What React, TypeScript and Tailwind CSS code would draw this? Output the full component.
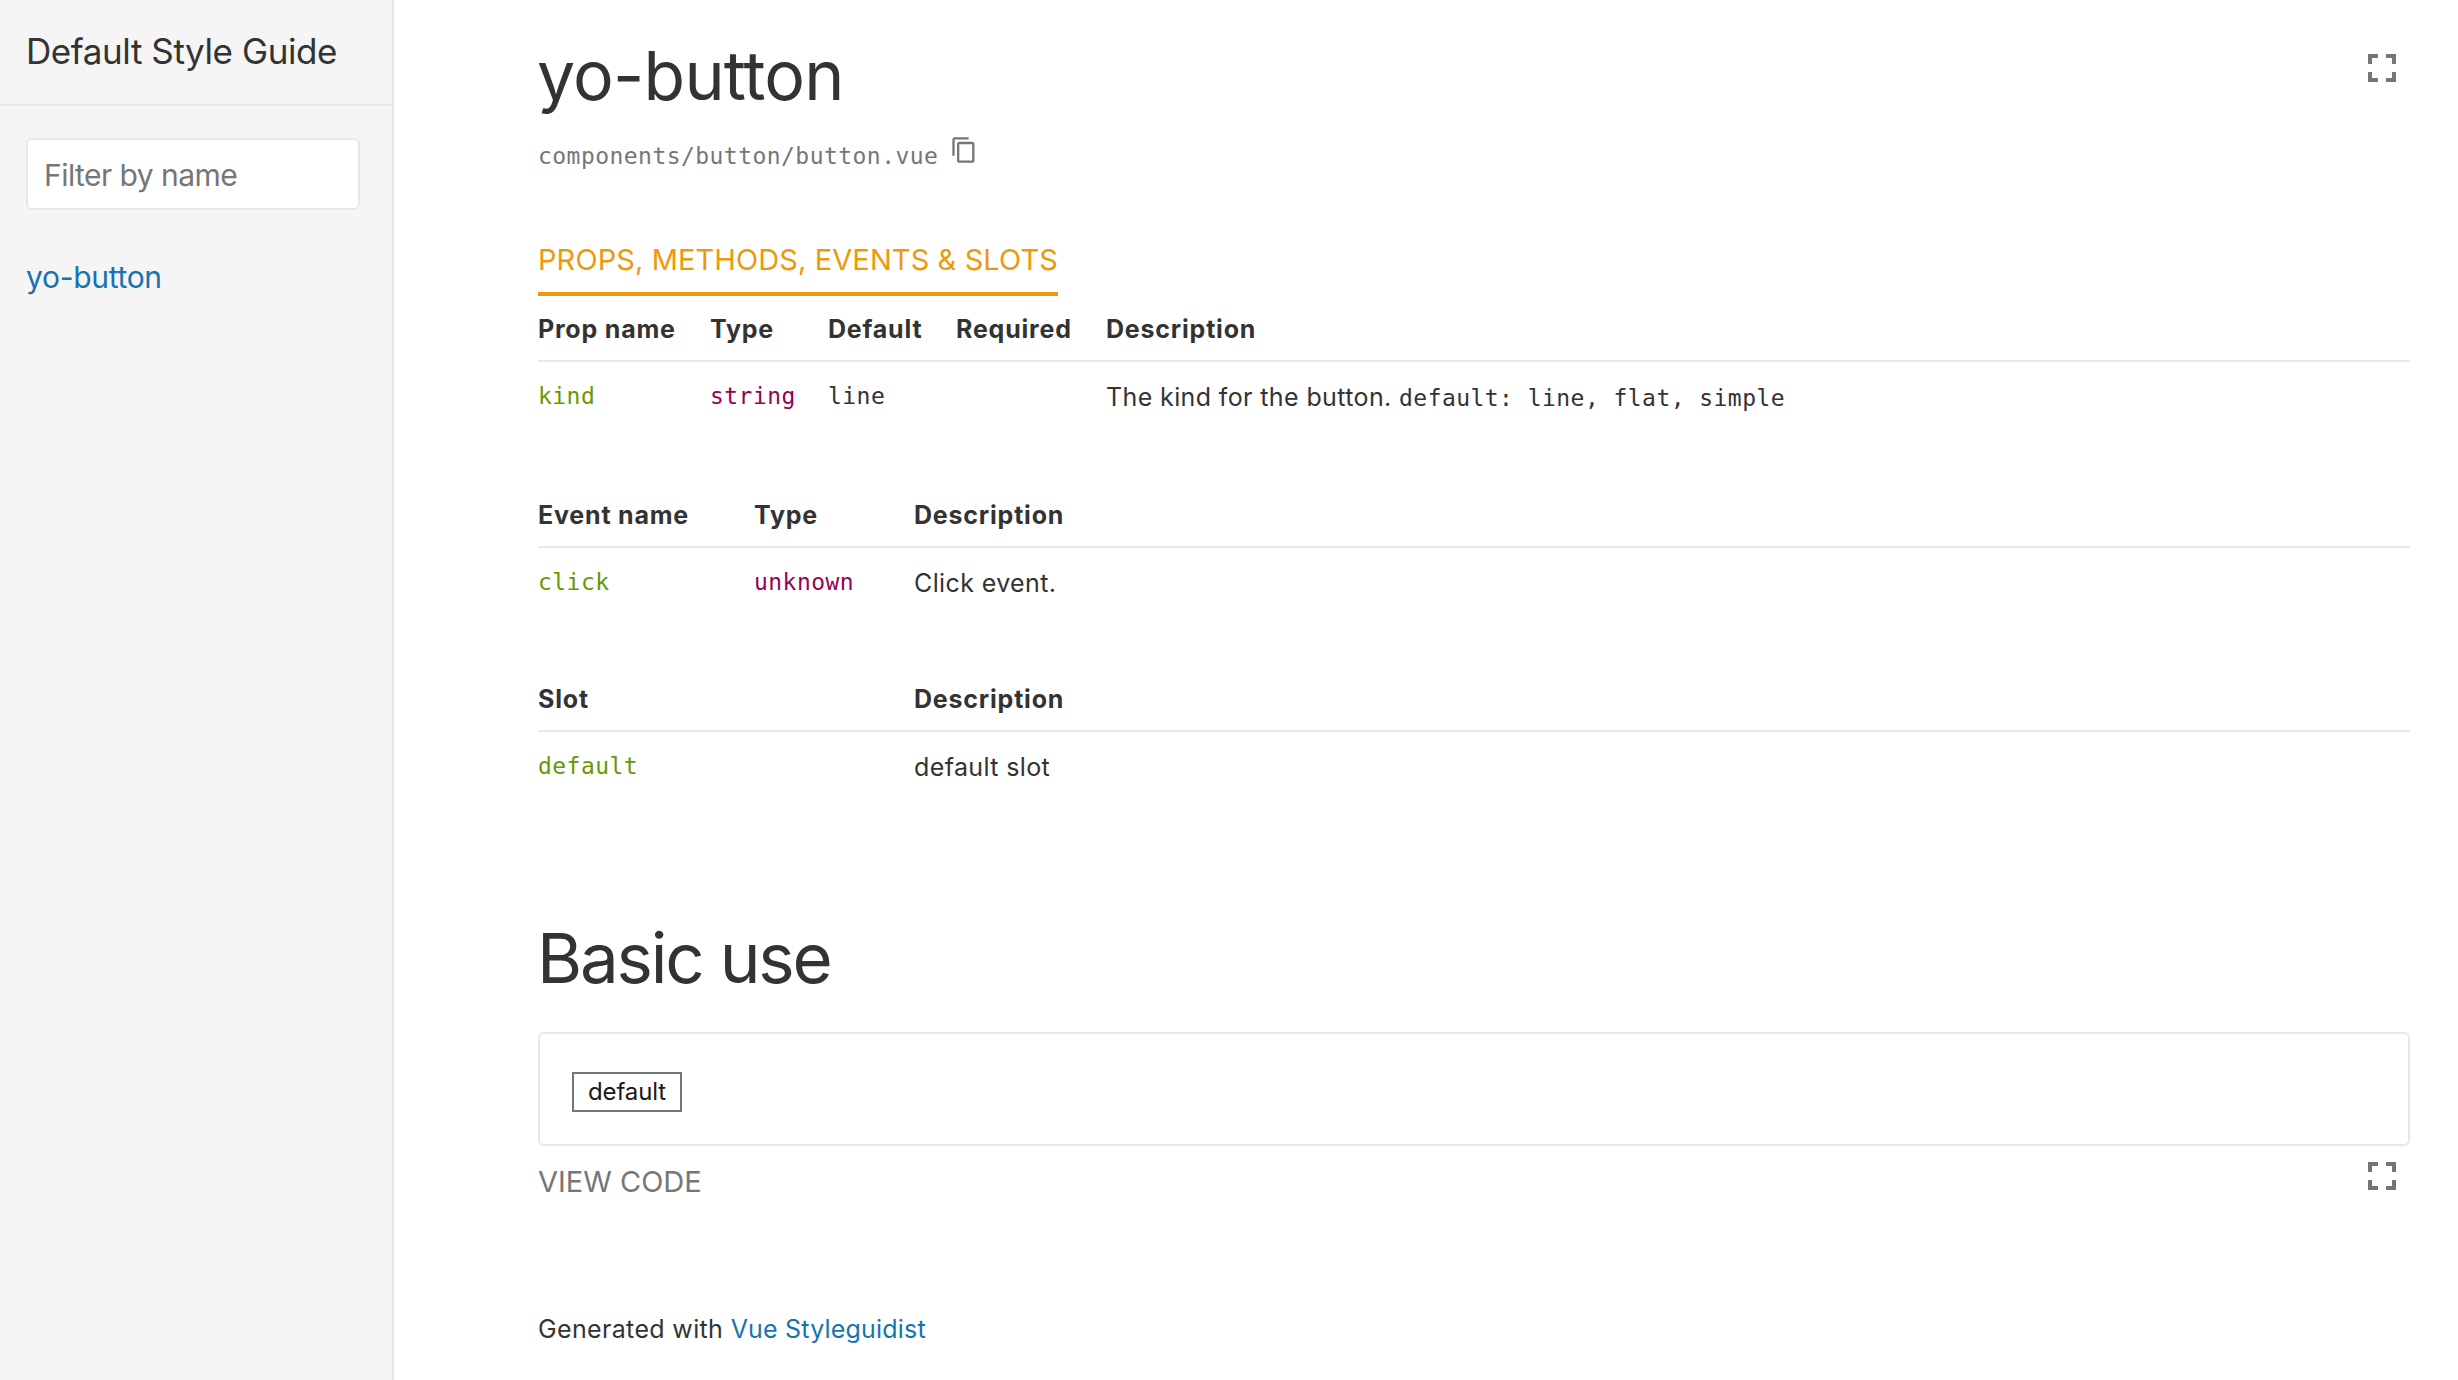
import React from "react";

const MONO = "font-['DejaVu_Sans_Mono',monospace] text-[23px] tracking-[0.45px]";

function FullscreenIcon({ className = "" }: { className?: string }) {
  return (
    <svg viewBox="0 0 24 24" fill="currentColor" className={"size-12 text-[#767676] " + className}>
      <path d="M7 14H5v5h5v-2H7v-3zm-2-4h2V7h3V5H5v5zm12 7h-3v2h5v-5h-2v3zM14 5v2h3v3h2V5h-5z" />
    </svg>
  );
}

function CopyIcon() {
  return (
    <svg viewBox="0 0 24 24" fill="currentColor" className="-mt-1.5 ml-3 size-7">
      <path d="M16 1H4c-1.1 0-2 .9-2 2v14h2V3h12V1zm3 4H8c-1.1 0-2 .9-2 2v14c0 1.1.9 2 2 2h11c1.1 0 2-.9 2-2V7c0-1.1-.9-2-2-2zm0 16H8V7h11v14z" />
    </svg>
  );
}

function CellCode({ children, className = "" }: { children: React.ReactNode; className?: string }) {
  return <code className={MONO + " block leading-8 " + className}>{children}</code>;
}

function Name({ children }: { children: React.ReactNode }) {
  return <CellCode className="text-[#669900]">{children}</CellCode>;
}

function Type({ children }: { children: React.ReactNode }) {
  return <CellCode className="text-[#990055]">{children}</CellCode>;
}

type TableProps = {
  columns: { title: string; width: string }[];
  cells: React.ReactNode[];
  className?: string;
};

function DocTable({ columns, cells, className = "" }: TableProps) {
  return (
    <table className={"w-full table-fixed border-collapse text-left " + className}>
      <thead>
        <tr className="shadow-[inset_0_-2px_0_#e8e8e8]">
          {columns.map((c) => (
            <th key={c.title} className={"h-[66px] p-0 pt-4 pb-4 align-top text-[25px] leading-[34px] font-bold tracking-[0.8px] whitespace-nowrap " + c.width}>
              {c.title}
            </th>
          ))}
        </tr>
      </thead>
      <tbody>
        <tr>
          {cells.map((cell, i) => (
            <td key={i} className="h-[52px] p-0 pt-[18px] align-top text-[25px] leading-[34px] tracking-[0.38px] whitespace-nowrap">
              <div className="h-[34px]">{cell}</div>
            </td>
          ))}
        </tr>
      </tbody>
    </table>
  );
}

export default function App() {
  return (
    <div className="flex h-[1380px] w-full overflow-hidden bg-white font-['Inter',sans-serif] text-[#333333]">
      <aside className="w-[394px] shrink-0 border-r-2 border-[#e8e8e8] bg-[#f5f5f5]">
        <header className="h-[106px] border-b-2 border-[#e8e8e8] pt-[30px] pl-[26px]">
          <h1 className="text-[35px] leading-[42px] tracking-[-0.42px]">Default Style Guide</h1>
        </header>
        <div className="pt-8 pr-8 pl-[26px]">
          <input
            placeholder="Filter by name"
            className="block h-[72px] w-full rounded-md border-2 border-[#e8e8e8] bg-white px-4 pt-0.5 text-[30px] tracking-[-0.55px] placeholder:text-[#767676]"
          />
        </div>
        <nav className="mt-[47px] pl-[26px]">
          <a className="block text-[30px] leading-10 tracking-[-0.3px] text-[#1673b1]">yo-button</a>
        </nav>
      </aside>

      <main className="min-w-0 flex-1 pr-12 pl-36">
        <header className="flex items-start justify-between">
          <h2 className="-ml-px pt-[35px] text-[68px] leading-[80px] font-[430] tracking-[-0.8px]">yo-button</h2>
          <FullscreenIcon className="mt-11 mr-1" />
        </header>
        <div className="mt-[27px] flex h-8 items-start text-[#767676]">
          <span className={MONO + " leading-7"}>components/button/button.vue</span>
          <CopyIcon />
        </div>

        <button className="mt-[67px] block w-[520px] border-b-4 border-[#ee990c] pb-3.5 text-left text-[29px] leading-[37px] tracking-[0.1px] whitespace-nowrap text-[#ee990c]">
          PROPS, METHODS, EVENTS &amp; SLOTS
        </button>

        <DocTable
          columns={[
            { title: "Prop name", width: "w-[172px]" },
            { title: "Type", width: "w-[118px]" },
            { title: "Default", width: "w-[128px]" },
            { title: "Required", width: "w-[150px]" },
            { title: "Description", width: "" },
          ]}
          cells={[
            <Name>kind</Name>,
            <Type>string</Type>,
            <CellCode>line</CellCode>,
            "",
            <>
              The kind for the button. <code className={MONO}>default: line, flat, simple</code>
            </>,
          ]}
        />
        <DocTable
          className="mt-[68px]"
          columns={[
            { title: "Event name", width: "w-[216px]" },
            { title: "Type", width: "w-[160px]" },
            { title: "Description", width: "" },
          ]}
          cells={[<Name>click</Name>, <Type>unknown</Type>, "Click event."]}
        />
        <DocTable
          className="mt-[66px]"
          columns={[
            { title: "Slot", width: "w-[376px]" },
            { title: "Description", width: "" },
          ]}
          cells={[<Name>default</Name>, "default slot"]}
        />

        <h2 className="mt-[134px] -ml-px text-[69px] leading-[81px] font-[430] tracking-[-2.2px]">Basic use</h2>
        <div className="mt-[33px] h-[114px] rounded-md border-2 border-[#e8e8e8] px-8 pt-[38px]">
          <button className="flex h-10 w-[110px] items-center justify-center border-2 border-[#767676] bg-white text-[24px] leading-none tracking-[-0.09px] text-[#1a1a1a]">
            default
          </button>
        </div>
        <div className="flex h-[54px] items-start justify-between">
          <button className="mt-[18px] text-[29px] leading-9 text-[#767676]">VIEW CODE</button>
          <FullscreenIcon className="mt-1.5 mr-1" />
        </div>

        <footer className="mt-28 text-[25px] leading-[34px] tracking-[0.35px]">
          Generated with <a className="tracking-[0.2px] text-[#1673b1]">Vue Styleguidist</a>
        </footer>
      </main>
    </div>
  );
}
